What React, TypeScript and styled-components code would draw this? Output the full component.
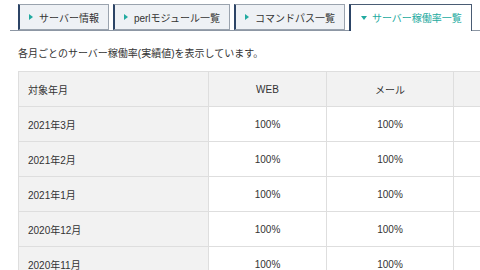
import React from "react";
import styled, { createGlobalStyle } from "styled-components";

const Global = createGlobalStyle`
  html, body { margin: 0; padding: 0; background: #fff; overflow: hidden; }
  body { font-family: "Liberation Sans", "Noto Sans CJK JP", sans-serif; color: #333; }
`;

const Page = styled.div`
  width: 480px;
  height: 270px;
  overflow: hidden;
  padding: 4px 0 0 10px;
  box-sizing: border-box;
`;

const TabBar = styled.div`
  display: flex;
  align-items: flex-end;
  gap: 4px;
  padding-left: 8px;
  border-bottom: 1px solid #8d97a4;
  height: 26px;
  width: 600px;
`;

const Tab = styled.div<{ $active?: boolean }>`
  box-sizing: border-box;
  height: ${(p) => (p.$active ? "27px" : "26px")};
  margin-bottom: ${(p) => (p.$active ? "-1px" : "0")};
  display: flex;
  align-items: center;
  gap: ${(p) => (p.$active ? "5px" : "6px")};
  padding: ${(p) => (p.$active ? "0 9px 1px 10px" : "0 9px 0 9px")};
  background: ${(p) => (p.$active ? "#fff" : "#eef1f5")};
  border: 1px solid ${(p) => (p.$active ? "#4a5c74" : "#9aa3ae")};
  border-left: 2px solid #2c4466;
  border-bottom: ${(p) => (p.$active ? "none" : "1px solid #9aa3ae")};
  font-size: 10px;
  color: ${(p) => (p.$active ? "#22aaa0" : "#333")};
  white-space: nowrap;
`;

const Arrow = styled.span<{ $down?: boolean }>`
  width: 0;
  height: 0;
  display: inline-block;
  ${(p) =>
    p.$down
      ? `border-left: 3px solid transparent; border-right: 3px solid transparent; border-top: 4px solid #22aaa0;`
      : `border-top: 3px solid transparent; border-bottom: 3px solid transparent; border-left: 4px solid #22aaa0;`}
`;

const Desc = styled.p`
  margin: 16px 0 0 8px;
  font-size: 10px;
  line-height: 13px;
  white-space: nowrap;
`;

const Table = styled.table`
  margin: 11px 0 0 8px;
  border-collapse: collapse;
  table-layout: fixed;
  width: 560px;
  font-size: 10px;
`;

const Cell = styled.td<{ $head?: boolean; $left?: boolean }>`
  height: 34px;
  padding: 0;
  border: 1px solid #dedede;
  background: ${(p) => (p.$head ? "#f2f2f2" : "#fff")};
  text-align: ${(p) => (p.$left ? "left" : "center")};
  padding-left: ${(p) => (p.$left ? "9px" : "0")};
  color: #333;
  white-space: nowrap;
`;

const rows = ["2021年3月", "2021年2月", "2021年1月", "2020年12月", "2020年11月"];

export default function App() {
  return (
    <>
      <Global />
      <Page>
        <TabBar>
          <Tab><Arrow />サーバー情報</Tab>
          <Tab><Arrow />perlモジュール一覧</Tab>
          <Tab><Arrow />コマンドパス一覧</Tab>
          <Tab $active><Arrow $down />サーバー稼働率一覧</Tab>
        </TabBar>
        <Desc>各月ごとのサーバー稼働率(実績値)を表示しています。</Desc>
        <Table>
          <colgroup>
            <col style={{ width: 190 }} />
            <col style={{ width: 118 }} />
            <col style={{ width: 127 }} />
            <col style={{ width: 125 }} />
          </colgroup>
          <tbody>
            <tr>
              <Cell $head $left>対象年月</Cell>
              <Cell $head>WEB</Cell>
              <Cell $head>メール</Cell>
              <Cell $head />
            </tr>
            {rows.map((r) => (
              <tr key={r}>
                <Cell $head $left>{r}</Cell>
                <Cell>100%</Cell>
                <Cell>100%</Cell>
                <Cell />
              </tr>
            ))}
          </tbody>
        </Table>
      </Page>
    </>
  );
}
